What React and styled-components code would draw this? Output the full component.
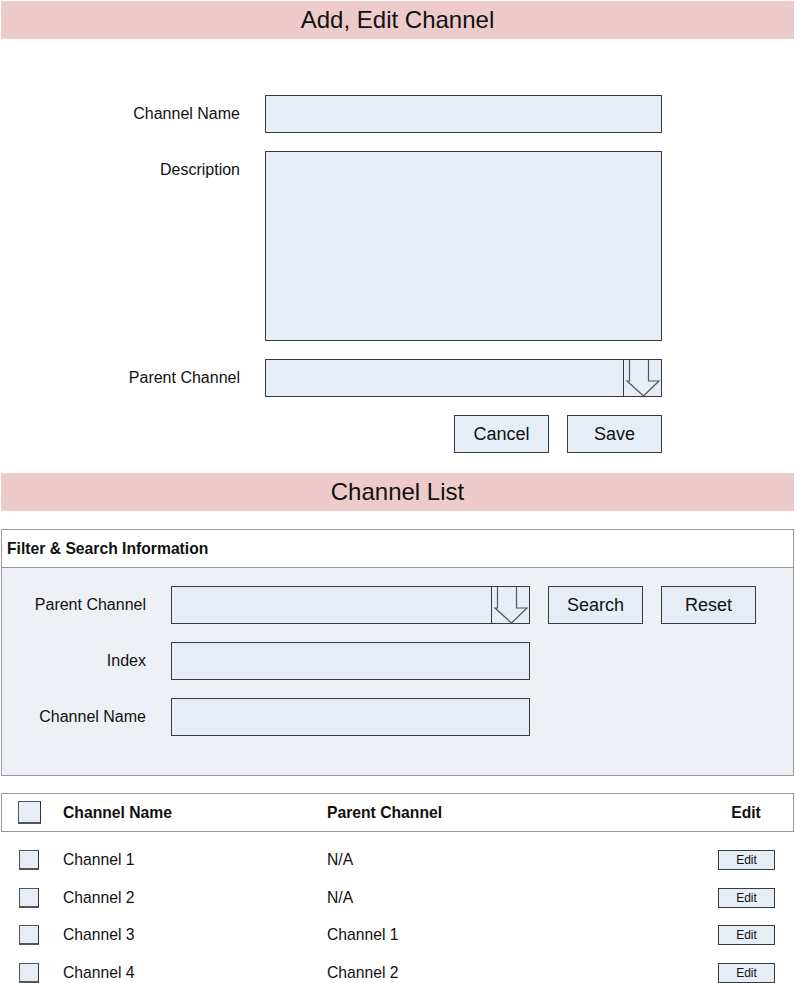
import React from 'react';
import styled, { createGlobalStyle } from 'styled-components';

const GlobalStyle = createGlobalStyle`
    body {
        margin: 0;
        background: #fff;
        font-family: "Liberation Sans", Arial, sans-serif;
        color: #111;
    }
`;

const Page = styled.div`
    width: 795px;
`;

const SectionBar = styled.div`
    margin: ${p => p.top || 1}px 1px 0;
    height: 38px;
    background: #eecbcb;
    display: flex;
    align-items: center;
    justify-content: center;
    font-size: 24px;
`;

const Form = styled.div`
    display: grid;
    grid-template-columns: 240px 397px;
    column-gap: 25px;
    row-gap: 18px;
    margin-top: 56px;
`;

const Label = styled.div`
    line-height: 38px;
    text-align: right;
    font-size: 16px;
    white-space: nowrap;
`;

const Field = styled.div`
    box-sizing: border-box;
    height: ${p => p.h || 38}px;
    width: ${p => (p.w ? `${p.w}px` : 'auto')};
    border: 1px solid #3a3a3a;
    background: #e7edf7;
    display: flex;
    justify-content: flex-end;
`;

const ArrowBox = styled.div`
    width: 38px;
    height: 100%;
    border-left: 1px solid #3a3a3a;
    box-sizing: border-box;
    svg {
        display: block;
    }
`;

const ButtonRow = styled.div`
    grid-column: 2;
    display: flex;
    justify-content: flex-end;
    gap: 18px;
`;

const Button = styled.button`
    box-sizing: border-box;
    width: 95px;
    height: 38px;
    border: 1px solid #3a3a3a;
    background: #e7edf7;
    font-family: inherit;
    font-size: 18px;
    color: #111;
    padding: 0;
`;

const Panel = styled.div`
    margin: 18px 1px 0;
    border: 1px solid #999;
`;

const PanelHeader = styled.div`
    height: 37px;
    border-bottom: 1px solid #999;
    display: flex;
    align-items: center;
    padding-left: 5px;
    font-weight: bold;
    font-size: 15.7px;
    background: #fff;
`;

const PanelBody = styled.div`
    background: #edf0f5;
    padding: 18px 0 39px;
    display: flex;
    flex-direction: column;
    gap: 18px;
`;

const FilterRow = styled.div`
    display: flex;
    align-items: center;
`;

const FilterLabel = styled(Label)`
    width: 144px;
    margin-right: 25px;
`;

const Gap = styled.div`
    width: 18px;
`;

const TableHead = styled.div`
    margin: 17px 1px 0;
    border: 1px solid #999;
    height: 37px;
    display: grid;
    grid-template-columns: 61px 264px 1fr 58px;
    padding-right: 18px;
    align-items: center;
    font-weight: bold;
    font-size: 15.7px;
`;

const Row = styled.div`
    margin: 0 2px;
    height: 37.7px;
    display: grid;
    grid-template-columns: 61px 264px 1fr 58px;
    padding-right: 18px;
    align-items: center;
    font-size: 15.7px;
    &:first-of-type {
        margin-top: 9px;
    }
`;

const Check = styled.div`
    box-sizing: border-box;
    width: ${p => p.size}px;
    height: ${p => p.size}px;
    margin-left: ${p => p.offset}px;
    border: 1px solid #555;
    border-right-color: #333;
    border-bottom: 2px solid #555;
    background: #e7edf7;
`;

const EditButton = styled.button`
    box-sizing: border-box;
    width: 57px;
    height: 20px;
    border: 1px solid #3a3a3a;
    background: #e7edf7;
    font-family: inherit;
    font-size: 12px;
    color: #111;
    padding: 0;
    justify-self: end;
`;

const Centered = styled.div`
    text-align: center;
`;

const Arrow = () => (
    <ArrowBox>
        <svg width="37" height="36" viewBox="0 0 37 36">
            <polyline
                points="5.5,0 5.5,21 3,21 19.5,36 35,21 24.5,21 24.5,0"
                fill="none"
                stroke="#555"
                strokeWidth="1.2"
            />
        </svg>
    </ArrowBox>
);

const rows = [
    ['Channel 1', 'N/A'],
    ['Channel 2', 'N/A'],
    ['Channel 3', 'Channel 1'],
    ['Channel 4', 'Channel 2'],
];

export default function App() {
    return (
        <Page>
            <GlobalStyle />
            <SectionBar>Add, Edit Channel</SectionBar>

            <Form>
                <Label>Channel Name</Label>
                <Field />
                <Label>Description</Label>
                <Field h={190} />
                <Label>Parent Channel</Label>
                <Field>
                    <Arrow />
                </Field>
                <ButtonRow>
                    <Button>Cancel</Button>
                    <Button>Save</Button>
                </ButtonRow>
            </Form>

            <SectionBar top={20}>Channel List</SectionBar>

            <Panel>
                <PanelHeader>Filter &amp; Search Information</PanelHeader>
                <PanelBody>
                    <FilterRow>
                        <FilterLabel>Parent Channel</FilterLabel>
                        <Field w={359}>
                            <Arrow />
                        </Field>
                        <Gap />
                        <Button>Search</Button>
                        <Gap />
                        <Button>Reset</Button>
                    </FilterRow>
                    <FilterRow>
                        <FilterLabel>Index</FilterLabel>
                        <Field w={359} />
                    </FilterRow>
                    <FilterRow>
                        <FilterLabel>Channel Name</FilterLabel>
                        <Field w={359} />
                    </FilterRow>
                </PanelBody>
            </Panel>

            <TableHead>
                <Check size={23} offset={16} />
                <div>Channel Name</div>
                <div>Parent Channel</div>
                <Centered>Edit</Centered>
            </TableHead>
            <div>
                {rows.map(([name, parent]) => (
                    <Row key={name}>
                        <Check size={20} offset={17} />
                        <div>{name}</div>
                        <div>{parent}</div>
                        <EditButton>Edit</EditButton>
                    </Row>
                ))}
            </div>
        </Page>
    );
}
